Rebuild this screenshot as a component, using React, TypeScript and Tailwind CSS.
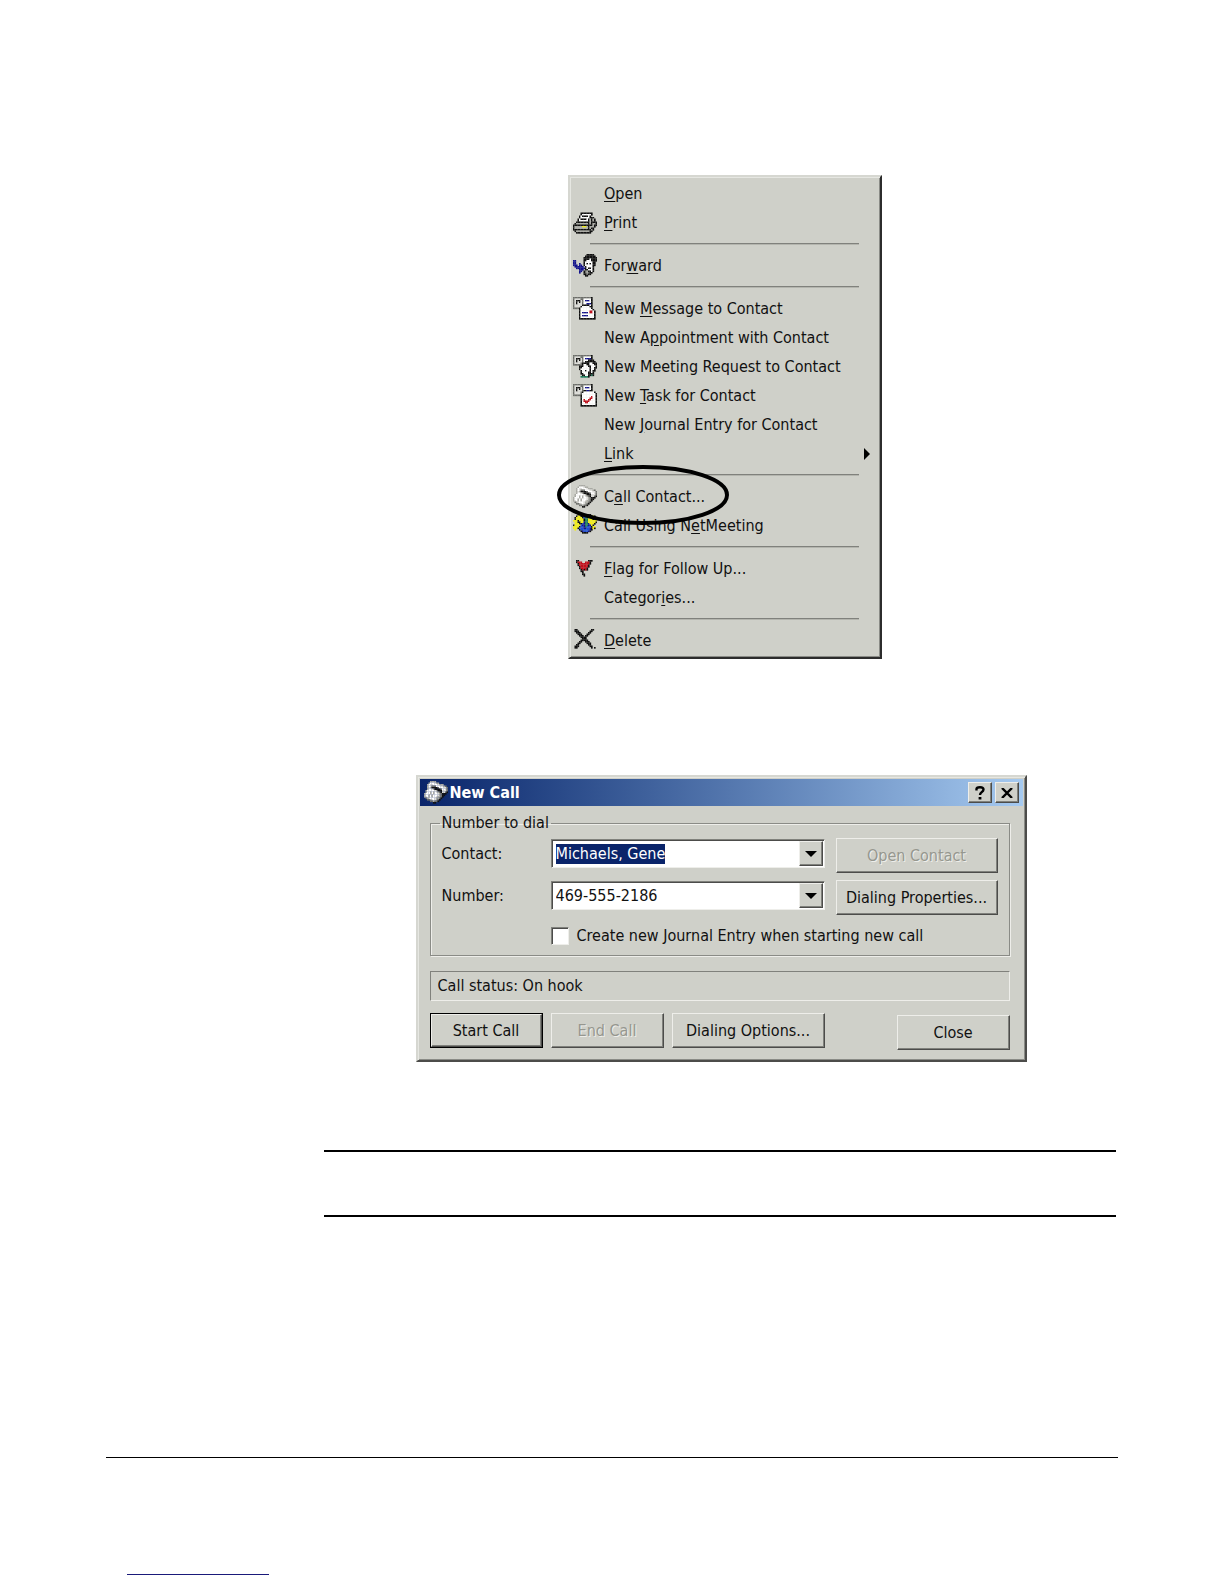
import { useEffect, useRef } from "react"
import type { ReactNode } from "react"

const palette: Record<string, string> = {
  k: "#111111",
  w: "#ffffff",
  g: "#a9aaa4",
  d: "#6d6e6a",
  l: "#dededa",
  y: "#f2ee1c",
  b: "#12128c",
  c: "#1f4fd0",
  r: "#c0101c",
  t: "#1c7a5a",
}

const icons = {
  printer: [
    "................",
    ".....kkkkkkkk...",
    ".....kwwwwwwk...",
    "....kwkkkkwk....",
    "....kwwwwwwkkk..",
    "...kwkkkkwkgkgk.",
    "...kwwwwwwkgkgk.",
    "..kkkkkkkkkgkkkk",
    ".kggggggggkgkggk",
    "kkkkkkkkkkkkkgkk",
    "kgggggyyygkgggk.",
    "kgggggggggkgkk..",
    "kkkkkkkkkkkkgk..",
    ".kgggggggggkk...",
    "..kkkkkkkkkk....",
    "................",
  ],
  forward: [
    ".........kkkkk..",
    "........kkkkkkk.",
    ".......kkkkkkkkk",
    ".......kkkkwkkkk",
    "bb.....kkwwwkkkk",
    "bb.....kwwwwwkk.",
    "bb..b..kwkwkwkk.",
    "bbb.bb.kwwwwwkk.",
    ".bbbbbb.kwwwwk..",
    "..bbbbbbkwkkwk..",
    "....bbb.kkwwwk..",
    "....bb.kdgkkwk..",
    "....b..kdgdkk...",
    ".......kkdkk....",
    "........kk......",
    "................",
  ],
  message: [
    "ddddddddddddk...",
    "dllllddwwwwwk...",
    "dlkkkldwbbbwk...",
    "dlklkldwwwwwk...",
    "dlkllldwwbbbk...",
    "dlllllkkkkkwk...",
    "dllllkwwwwwkk...",
    "ddddkwwwwwwwk...",
    "....kwwwwwwwwk..",
    "....kwwwwwwrrwk.",
    "....kwbbbbwrrwk.",
    "....kwwwwwwwwwk.",
    "....kwbbbbwwwwk.",
    "....kwwwwwwwwwk.",
    "....kkkkkkkkkkk.",
    "................",
  ],
  meeting: [
    "ddddddddddddk...",
    "dllllddwwwwwk...",
    "dlkkkldwbbbbk...",
    "dlklkldwwwkkkk..",
    "dlkllldwkkkkkkk.",
    "dlllldkkkkkwwkkk",
    "ddddddkwwkkwwwkk",
    "....kkkwwwkkwwwk",
    "....kkwwwwwkwwkk",
    "....kwwwwwwkwwk.",
    ".....kwwkwwkwkk.",
    ".....kwwwwkkwk..",
    ".....kkwwwkkkk..",
    "......kkwwkktk..",
    ".....tttttk.....",
    "................",
  ],
  task: [
    "ddddddddddddk...",
    "dllllddwwwwwk...",
    "dlkkkldwbbbwk...",
    "dlklkldwwwwwk...",
    "dlkllldkkbbkk...",
    "dlllldkwwwwwwwk.",
    "dlllldwwwwwwwwwk",
    "dddddkwwwwwwwwwk",
    ".....kwwwwwwrwwk",
    ".....kwwwwwrrwwk",
    ".....kwrwwrrwwwk",
    ".....kwrrrrwwwwk",
    ".....kwwrrwwwwwk",
    ".....kwwwwwwwwwk",
    ".....kkkkkkkkkkk",
    "................",
  ],
  phone: [
    "....gggg........",
    "...gwwwlgg......",
    "..gwllwwwlggg...",
    "..gwldddwwwllgd.",
    "..glgkkkkdwwwlld",
    "..gwwlgkkkkdwwld",
    ".gwwwwwlgkkkllld",
    ".gwwgwgwlgdklldk",
    "gwwwgwgwwlgdkkk.",
    "gwwgwgwwwlgdkk..",
    "glwgwgwwlggdk...",
    ".dglwwwlggdk....",
    "..ddglwlgdk.....",
    "....ddgddk......",
    "......kk........",
    "................",
  ],
  netMeeting: [
    "...kk...kkkk....",
    "..kyykkcctbkkyk.",
    ".kyyyykcttyyyyk.",
    ".kyyyyykttyyyk..",
    "yyykyyykttyyyyyy",
    ".yykkyybttyyyyyk",
    ".yyykkcbttbyyyk.",
    "kyyyycbbttbbyk..",
    "yyyykccbtccckyy.",
    "yyykcccbbccbkyk.",
    ".y..kccccccbk...",
    ".....kbcccbk....",
    "......kkkk......",
    "................",
    "................",
    "................",
  ],
  flag: [
    "................",
    "................",
    "..kk......kkk...",
    "..krrr..rrrk....",
    "...krrrrrrrk....",
    "...krrrrrrk.....",
    "....krrrrrk.....",
    "....krrrrk......",
    ".....krkrk......",
    ".....kk.........",
    "......k.........",
    "......kk........",
    ".......k........",
    "................",
    "................",
    "................",
  ],
  remove: [
    ".kk.........kk..",
    ".kkk.......kk...",
    "..kkk.....kk....",
    "...kkk...kk.....",
    "....kkk.kk......",
    ".....kkkk.......",
    "......kkk.......",
    ".....kkkkk......",
    "....kk..kkk.....",
    "...kk....kkk....",
    "..kk......kk....",
    ".kkk.......kk...",
    ".kk.........k.k.",
    "................",
    "................",
    "................",
  ],
}

type IconName = keyof typeof icons

function PixelIcon({ name }: { name: IconName }) {
  return (
    <svg viewBox="0 0 16 16" className="h-6 w-6" aria-hidden="true">
      {icons[name].flatMap((row, y) =>
        row
          .split("")
          .map((ch, x) => (ch === "." ? null : <rect key={`${x}-${y}`} x={x} y={y} width="1.1" height="1.1" fill={palette[ch]} />))
      )}
    </svg>
  )
}

interface MenuEntry {
  before: string
  hotkey: string
  after: string
  icon?: IconName
  submenu?: boolean
  circled?: boolean
}

const menuGroups: MenuEntry[][] = [
  [
    { before: "", hotkey: "O", after: "pen" },
    { before: "", hotkey: "P", after: "rint", icon: "printer" },
  ],
  [{ before: "For", hotkey: "w", after: "ard", icon: "forward" }],
  [
    { before: "New ", hotkey: "M", after: "essage to Contact", icon: "message" },
    { before: "New A", hotkey: "p", after: "pointment with Contact" },
    { before: "New Meetin", hotkey: "g", after: " Request to Contact", icon: "meeting" },
    { before: "New ", hotkey: "T", after: "ask for Contact", icon: "task" },
    { before: "New ", hotkey: "J", after: "ournal Entry for Contact" },
    { before: "", hotkey: "L", after: "ink", submenu: true },
  ],
  [
    { before: "C", hotkey: "a", after: "ll Contact...", icon: "phone", circled: true },
    { before: "Call Using N", hotkey: "e", after: "tMeeting", icon: "netMeeting" },
  ],
  [
    { before: "", hotkey: "F", after: "lag for Follow Up...", icon: "flag" },
    { before: "Categor", hotkey: "i", after: "es..." },
  ],
  [{ before: "", hotkey: "D", after: "elete", icon: "remove" }],
]

function MenuRow({ entry }: { entry: MenuEntry }) {
  return (
    <li role="none" className="relative">
      <button type="button" role="menuitem" className="flex h-[29px] w-full items-center gap-[7px] pr-[7px] text-left">
        <span className="h-6 w-6 shrink-0">{entry.icon && <PixelIcon name={entry.icon} />}</span>
        <span className="grow whitespace-nowrap">
          {entry.before}
          <span className="underline underline-offset-2">{entry.hotkey}</span>
          {entry.after}
        </span>
        {entry.submenu && (
          <svg viewBox="0 0 6 12" className="h-3 w-1.5" aria-hidden="true">
            <path d="M0 0L6 6L0 12Z" fill="#000" />
          </svg>
        )}
      </button>
      {entry.circled && (
        <svg viewBox="0 0 172 60" className="pointer-events-none absolute -top-[17px] -left-4 z-10 h-[60px] w-[172px]" aria-hidden="true">
          <ellipse cx="86" cy="30" rx="84" ry="28" fill="none" stroke="#000" strokeWidth="4" />
        </svg>
      )}
    </li>
  )
}

function ContextMenu() {
  return (
    <ul
      role="menu"
      className="w-[314px] border-2 border-t-[#d6d7d1] border-r-[#2c2c2c] border-b-[#2c2c2c] border-l-[#d6d7d1] bg-[#cfd0c9] px-[3px] py-0.5 shadow-[inset_1px_1px_#e6e7e2,inset_-1px_-1px_#8a8b86]"
    >
      {menuGroups.map((group, i) => (
        <li key={i} role="none">
          {i > 0 && (
            <div role="separator" className="flex h-3.5 items-center pr-[18px] pl-[17px]">
              <div className="h-0.5 grow border-t border-b border-t-[#80817c] border-b-[#b4b5ae]" />
            </div>
          )}
          <ul role="group">
            {group.map((entry) => (
              <MenuRow key={entry.before + entry.hotkey + entry.after} entry={entry} />
            ))}
          </ul>
        </li>
      ))}
    </ul>
  )
}

const raised =
  "border border-t-[#eeeeea] border-l-[#eeeeea] border-r-[#4c4c4a] border-b-[#4c4c4a] bg-[#cfd0c9] shadow-[inset_-1px_-1px_#80817c]"
const sunken =
  "border border-t-[#80817c] border-l-[#80817c] border-r-[#eeeeea] border-b-[#eeeeea] bg-white shadow-[inset_1px_1px_#4c4c4a]"

interface PushButtonProps {
  children: ReactNode
  className: string
  disabled?: boolean
}

function PushButton({ children, className, disabled }: PushButtonProps) {
  return (
    <button
      type="button"
      disabled={disabled}
      className={`${raised} h-[35px] whitespace-nowrap disabled:text-[#96978f] disabled:[text-shadow:1px_1px_#eeeeea] ${className}`}
    >
      {children}
    </button>
  )
}

function DownArrow() {
  return (
    <svg viewBox="0 0 12 6" className="h-1.5 w-3" aria-hidden="true">
      <path d="M0 0H12L6 6Z" fill="#000" />
    </svg>
  )
}

function NewCallDialog() {
  const contactRef = useRef<HTMLInputElement>(null)

  useEffect(() => {
    contactRef.current?.focus()
    contactRef.current?.select()
  }, [])

  return (
    <section
      role="dialog"
      aria-labelledby="dialog-title"
      className="w-[611px] border-2 border-t-[#d6d7d1] border-r-[#4c4c4a] border-b-[#4c4c4a] border-l-[#d6d7d1] bg-[#cfd0c9] p-0.5 shadow-[inset_1px_1px_#e6e7e2,inset_-1px_-1px_#8a8b86]"
    >
      <header className="flex h-[27px] items-center bg-linear-to-r from-[#0a246a] to-[#a6caf0] px-1">
        <PixelIcon name="phone" />
        <h2 id="dialog-title" className="ml-0.5 grow font-bold text-white">
          New Call
        </h2>
        <button type="button" aria-label="Help" className={`${raised} mr-[3px] flex h-[21px] w-6 items-center justify-center`}>
          <svg viewBox="0 0 10 14" className="h-3.5 w-2.5" aria-hidden="true">
            <path d="M1.5 4.5V3Q1.5 1.2 5 1.2T8.5 3.6Q8.5 5 6.6 6.2Q5 7.2 5 9" fill="none" stroke="#000" strokeWidth="2.4" />
            <path d="M3.6 11H6.4V13.5H3.6Z" fill="#000" />
          </svg>
        </button>
        <button type="button" aria-label="Close" className={`${raised} flex h-[21px] w-6 items-center justify-center`}>
          <svg viewBox="0 0 12 10" className="h-2.5 w-3" aria-hidden="true">
            <path d="M1 0L11 10M11 0L1 10" stroke="#000" strokeWidth="2.4" />
          </svg>
        </button>
      </header>

      <form className="pt-[5px] pr-[13px] pb-2 pl-2.5">
        <fieldset className="border border-[#8a8b86] px-[11px] pb-2 shadow-[1px_1px_#eeeeea,inset_1px_1px_#eeeeea]">
          <legend className="-ml-0.5 h-6 px-0.5 leading-6">Number to dial</legend>
          <div className="grid grid-cols-[109px_1fr_162px] items-start gap-y-[7px] pt-[3px]">
            <label htmlFor="contact" className="leading-8">
              Contact:
            </label>
            <div className={`${sunken} mt-px mr-[11px] flex h-[29px] p-px pl-0.5`}>
              <div className="flex grow items-center">
                <input
                  id="contact"
                  ref={contactRef}
                  defaultValue="Michaels, Gene"
                  className="h-5 w-full min-w-0 pl-0.5 leading-5 outline-none selection:bg-[#0a246a] selection:text-white"
                />
              </div>
              <button type="button" aria-label="Show contacts" className={`${raised} flex w-6 shrink-0 items-center justify-center`}>
                <DownArrow />
              </button>
            </div>
            <PushButton className="w-full" disabled>
              Open Contact
            </PushButton>

            <label htmlFor="number" className="leading-8">
              Number:
            </label>
            <div className={`${sunken} mt-px mr-[11px] grid h-[29px] p-px pl-0.5`}>
              <select id="number" className="col-start-1 row-start-1 appearance-none pl-0.5 outline-none">
                <option>469-555-2186</option>
              </select>
              <span className={`${raised} pointer-events-none col-start-1 row-start-1 flex w-6 items-center justify-center justify-self-end`}>
                <DownArrow />
              </span>
            </div>
            <PushButton className="w-full">Dialing Properties...</PushButton>
          </div>
          <div className="mt-2.5 flex h-[22px] items-center gap-2 pl-[109px]">
            <input id="journal" type="checkbox" className={`${sunken} h-[18px] w-[18px] appearance-none`} />
            <label htmlFor="journal">Create new Journal Entry when starting new call</label>
          </div>
        </fieldset>

        <p
          role="status"
          className="mt-[15px] h-[30px] border border-t-[#80817c] border-r-[#eeeeea] border-b-[#eeeeea] border-l-[#80817c] px-[7px] leading-7"
        >
          Call status: On hook
        </p>

        <div className="mt-3 flex items-start">
          <div className="mr-2 border border-black">
            <button type="button" className={`${raised} block h-[33px] w-[111px]`}>
              Start Call
            </button>
          </div>
          <PushButton className="mr-2 w-[113px]" disabled>
            End Call
          </PushButton>
          <PushButton className="w-[153px]">Dialing Options...</PushButton>
          <PushButton className="mt-0.5 ml-auto w-[113px]">Close</PushButton>
        </div>
      </form>
    </section>
  )
}

export default function App() {
  return (
    <div className="bg-white px-[106px] pt-[175px] pb-2 font-['DejaVu_Sans_Condensed','DejaVu_Sans',sans-serif] text-base text-[#111111]">
      <main className="border-b border-black pb-60 pl-[218px]">
        <div className="flex justify-center pl-2">
          <ContextMenu />
        </div>
        <div className="mt-[116px] flex justify-center">
          <NewCallDialog />
        </div>
        <div className="mt-[88px] mr-0.5 h-[67px] border-t-2 border-b-2 border-black" />
      </main>
      <footer className="pt-[116px] pl-[21px]">
        <a href="#top" aria-label="Back to top" className="block w-[142px] border-b border-[#1a1a7a]" />
      </footer>
    </div>
  )
}
